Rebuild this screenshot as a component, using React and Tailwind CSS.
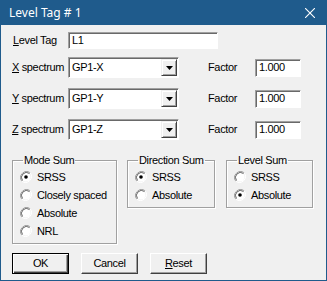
import React from "react";

const F = { fontFamily: '"Liberation Sans", Arial, sans-serif', letterSpacing: "-0.35px" };

function Sunken({ className, children }) {
  return (
    <div
      className={`bg-white border border-t-[#a0a0a0] border-l-[#a0a0a0] border-r-white border-b-white shadow-[inset_1px_1px_0_#696969] flex items-center pl-[3px] text-[11px] text-black whitespace-nowrap ${className}`}
    >
      {children}
    </div>
  );
}

function Combo({ value }) {
  return (
    <div className="w-[111px] h-[21px] bg-white border border-t-[#a0a0a0] border-l-[#a0a0a0] border-r-white border-b-white shadow-[inset_1px_1px_0_#696969] flex items-center">
      <div className="flex-1 pl-[3px] text-[11px] text-black whitespace-nowrap">{value}</div>
      <div className="w-[16px] h-[17px] mr-[1px] bg-[#f0f0f0] border border-t-[#f0f0f0] border-l-[#f0f0f0] border-r-[#404040] border-b-[#404040] shadow-[inset_1px_1px_0_#fff,inset_-1px_-1px_0_#a0a0a0] flex items-center justify-center">
        <svg width="7" height="4" viewBox="0 0 7 4">
          <path d="M0 0h7L3.5 4z" fill="#000" />
        </svg>
      </div>
    </div>
  );
}

function Radio({ checked, label }) {
  return (
    <div className="flex items-center h-[18px]">
      <svg width="12" height="12" viewBox="0 0 12 12" className="shrink-0">
        <path d="M10.2 1.8A6 6 0 0 0 1.8 10.2" fill="none" stroke="#a0a0a0" strokeWidth="1" />
        <path d="M1.8 10.2A6 6 0 0 0 10.2 1.8" fill="none" stroke="#ffffff" strokeWidth="1" />
        <circle cx="6" cy="6" r="4.5" fill="#fff" />
        <path d="M9.5 2.5A5 5 0 0 0 2.5 9.5" fill="none" stroke="#696969" strokeWidth="1" />
        {checked && <circle cx="6" cy="6" r="1.8" fill="#000" />}
      </svg>
      <span className="ml-[5px] text-[11px] text-black whitespace-nowrap">{label}</span>
    </div>
  );
}

function Group({ title, className, children }) {
  return (
    <fieldset
      className={`border border-[#a0a0a0] shadow-[1px_1px_0_#fff,inset_1px_1px_0_#fff] pl-[6px] pb-[2px] ${className}`}
    >
      <legend className="px-[1px] ml-[4px] text-[11px] text-black leading-[13px] whitespace-nowrap">{title}</legend>
      {children}
    </fieldset>
  );
}

function Btn({ children, def }) {
  return (
    <div
      className={`w-[57px] h-[21px] flex items-center justify-center text-[11px] text-black bg-[#f0f0f0] ${
        def
          ? "border border-black shadow-[inset_1px_1px_0_#fff,inset_-1px_-1px_0_#404040,inset_-2px_-2px_0_#a0a0a0]"
          : "border border-t-white border-l-white border-r-[#404040] border-b-[#404040] shadow-[inset_-1px_-1px_0_#a0a0a0]"
      }`}
    >
      {children}
    </div>
  );
}

function SpecRow({ letter, value }) {
  return (
    <div className="flex items-center h-[21px]">
      <div className="w-[56px] text-[11px] text-black whitespace-nowrap">
        <u>{letter}</u> spectrum
      </div>
      <Combo value={value} />
      <div className="ml-[29px] w-[47px] text-[11px] text-black">Factor</div>
      <Sunken className="w-[46px] h-[18px]">1.000</Sunken>
    </div>
  );
}

export default function App() {
  return (
    <div style={F} className="w-[327px] h-[281px] bg-[#1f5b8c] flex flex-col">
      <div className="h-[25px] flex items-center justify-between pl-[9px] pr-[12px] text-white">
        <span
          className="text-[12px]"
          style={{ fontFamily: '"Noto Sans", "Open Sans", sans-serif', letterSpacing: "0" }}
        >
          Level Tag # 1
        </span>
        <svg width="10" height="10" viewBox="0 0 10 10">
          <path d="M0 0L10 10M10 0L0 10" stroke="#fff" strokeWidth="1.1" />
        </svg>
      </div>
      <div className="flex-1 mx-[1px] mb-[1px] bg-[#f0f0f0] pl-[11px] pt-[7px]">
        <div className="flex items-center h-[17px]">
          <div className="w-[56px] text-[11px] text-black pl-[1px] whitespace-nowrap">
            <u>L</u>evel Tag
          </div>
          <Sunken className="w-[150px] h-[17px]">L1</Sunken>
        </div>
        <div className="flex flex-col gap-[10px] mt-[8px]">
          <SpecRow letter="X" value="GP1-X" />
          <SpecRow letter="Y" value="GP1-Y" />
          <SpecRow letter="Z" value="GP1-Z" />
        </div>
        <div className="flex items-start gap-[10px] mt-[14px]">
          <Group title="Mode Sum" className="w-[105px] h-[90px]">
            <div className="pl-[1px] mt-[1px]">
              <Radio checked label="SRSS" />
              <Radio label="Closely spaced" />
              <Radio label="Absolute" />
              <Radio label="NRL" />
            </div>
          </Group>
          <Group title="Direction Sum" className="w-[88px] h-[54px]">
            <div className="pl-[1px] mt-[1px]">
              <Radio checked label="SRSS" />
              <Radio label="Absolute" />
            </div>
          </Group>
          <Group title="Level Sum" className="w-[87px] h-[54px] ml-[1px]">
            <div className="pl-[1px] mt-[1px]">
              <Radio label="SRSS" />
              <Radio checked label="Absolute" />
            </div>
          </Group>
        </div>
        <div className="flex gap-[12px] mt-[9px]">
          <Btn def>OK</Btn>
          <Btn>Cancel</Btn>
          <Btn>
            <span>
              <u>R</u>eset
            </span>
          </Btn>
        </div>
      </div>
    </div>
  );
}
